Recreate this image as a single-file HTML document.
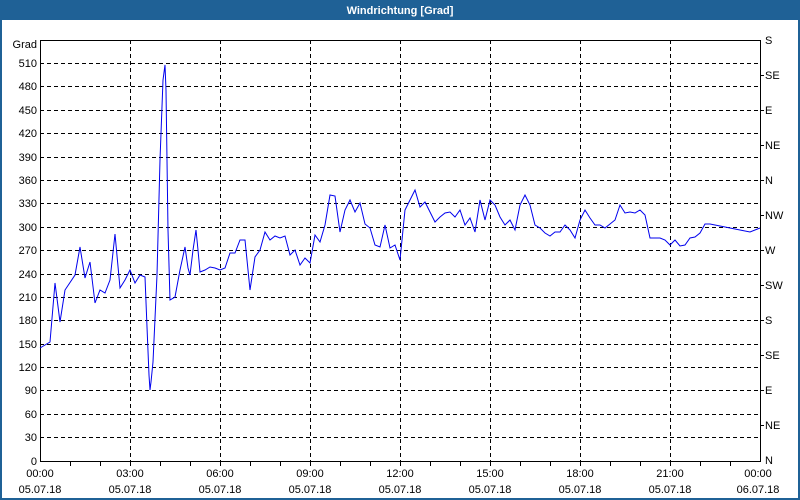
<!DOCTYPE html>
<html><head><meta charset="utf-8"><style>
html,body{margin:0;padding:0;background:#fff;}
body{width:800px;height:500px;overflow:hidden;position:relative;font-family:"Liberation Sans",sans-serif;}
</style></head><body>
<svg width="800" height="500" xmlns="http://www.w3.org/2000/svg" style="position:absolute;left:0;top:0" font-family="Liberation Sans, sans-serif" font-size="11">
<rect x="0" y="0" width="800" height="500" fill="#1f6196"/>
<rect x="2" y="20" width="796" height="478" fill="#fff"/>
<text x="400" y="14" fill="#fff" font-weight="bold" text-anchor="middle">Windrichtung [Grad]</text>
<g stroke="#000" stroke-dasharray="4,3" stroke-width="1">
<line x1="40" y1="63.5" x2="760" y2="63.5"/><line x1="40" y1="86.5" x2="760" y2="86.5"/><line x1="40" y1="110.5" x2="760" y2="110.5"/><line x1="40" y1="133.5" x2="760" y2="133.5"/><line x1="40" y1="157.5" x2="760" y2="157.5"/><line x1="40" y1="180.5" x2="760" y2="180.5"/><line x1="40" y1="203.5" x2="760" y2="203.5"/><line x1="40" y1="227.5" x2="760" y2="227.5"/><line x1="40" y1="250.5" x2="760" y2="250.5"/><line x1="40" y1="274.5" x2="760" y2="274.5"/><line x1="40" y1="297.5" x2="760" y2="297.5"/><line x1="40" y1="320.5" x2="760" y2="320.5"/><line x1="40" y1="344.5" x2="760" y2="344.5"/><line x1="40" y1="367.5" x2="760" y2="367.5"/><line x1="40" y1="390.5" x2="760" y2="390.5"/><line x1="40" y1="414.5" x2="760" y2="414.5"/><line x1="40" y1="437.5" x2="760" y2="437.5"/>
<line x1="130.5" y1="40" x2="130.5" y2="461"/><line x1="220.5" y1="40" x2="220.5" y2="461"/><line x1="310.5" y1="40" x2="310.5" y2="461"/><line x1="400.5" y1="40" x2="400.5" y2="461"/><line x1="490.5" y1="40" x2="490.5" y2="461"/><line x1="580.5" y1="40" x2="580.5" y2="461"/><line x1="670.5" y1="40" x2="670.5" y2="461"/>
</g>
<g stroke="#000" stroke-width="1" fill="none">
<path d="M40.5 461V40.5H760.5V461.5H40"/>
<path d="M70.5 461v5M100.5 461v5M130.5 461v5M160.5 461v5M190.5 461v5M220.5 461v5M250.5 461v5M280.5 461v5M310.5 461v5M340.5 461v5M370.5 461v5M400.5 461v5M430.5 461v5M460.5 461v5M490.5 461v5M520.5 461v5M550.5 461v5M580.5 461v5M610.5 461v5M640.5 461v5M670.5 461v5M700.5 461v5M730.5 461v5"/>
<path d="M760 75.5h4M760 110.5h4M760 145.5h4M760 180.5h4M760 215.5h4M760 250.5h4M760 285.5h4M760 320.5h4M760 355.5h4M760 390.5h4M760 425.5h4"/>
</g>
<polyline fill="none" stroke="#0000ee" stroke-width="1" points="40,348 50,342 55,283 60,322 65,290 75,275 80,247 85,278 90,262 95,303 100,290 105,293 110,280 115,234 120,288 125,280 130,270 135,283 140,275 145,277 147,327 149,375 150,390 151,382 153,362 157,275 160,160 163,80 165,65 166,90 168,230 170,300 175,297 180,270 185,247 188,268 190,275 193,250 196,230 198,250 200,272 205,270 210,267 215,268 220,270 225,268 230,253 235,253 240,240 245,240 250,290 255,257 260,250 265,232 270,240 275,236 280,238 285,236 290,255 295,250 300,265 305,258 310,263 315,235 320,242 325,225 330,195 335,196 340,232 345,210 350,200 355,212 360,203 365,224 370,228 375,245 380,247 385,225 390,248 395,245 400,260 405,210 410,200 415,190 420,207 425,202 430,212 435,222 440,217 445,213 450,212 455,217 460,210 465,225 470,218 475,232 480,200 485,220 490,200 495,205 500,217 505,225 510,220 515,230 520,205 525,195 530,205 535,225 540,228 545,233 550,236 555,232 560,232 565,225 570,230 575,238 580,220 585,210 590,218 595,225 600,225 605,228 610,224 615,220 620,205 625,213 630,212 635,213 640,210 645,215 650,238 655,238 660,238 665,240 670,245 675,240 680,246 685,245 690,238 695,237 700,233 705,224 710,224 720,226 730,228 740,230 750,232 760,228"/>
<g fill="#000" text-anchor="end">
<text x="37" y="48">Grad</text>
<text x="37" y="67">510</text><text x="37" y="90">480</text><text x="37" y="114">450</text><text x="37" y="137">420</text><text x="37" y="161">390</text><text x="37" y="184">360</text><text x="37" y="207">330</text><text x="37" y="231">300</text><text x="37" y="254">270</text><text x="37" y="278">240</text><text x="37" y="301">210</text><text x="37" y="324">180</text><text x="37" y="348">150</text><text x="37" y="371">120</text><text x="37" y="394">90</text><text x="37" y="418">60</text><text x="37" y="441">30</text><text x="37" y="465">0</text>
</g>
<g fill="#000">
<text x="765" y="44">S</text><text x="765" y="79">SE</text><text x="765" y="114">E</text><text x="765" y="149">NE</text><text x="765" y="184">N</text><text x="765" y="219">NW</text><text x="765" y="254">W</text><text x="765" y="289">SW</text><text x="765" y="324">S</text><text x="765" y="359">SE</text><text x="765" y="394">E</text><text x="765" y="429">NE</text><text x="765" y="464">N</text>
</g>
<g fill="#000" text-anchor="middle">
<text x="40" y="477">00:00</text><text x="130" y="477">03:00</text><text x="220" y="477">06:00</text><text x="310" y="477">09:00</text><text x="400" y="477">12:00</text><text x="490" y="477">15:00</text><text x="580" y="477">18:00</text><text x="670" y="477">21:00</text><text x="758" y="477">00:00</text>
<text x="40" y="493">05.07.18</text><text x="130" y="493">05.07.18</text><text x="220" y="493">05.07.18</text><text x="310" y="493">05.07.18</text><text x="400" y="493">05.07.18</text><text x="490" y="493">05.07.18</text><text x="580" y="493">05.07.18</text><text x="670" y="493">05.07.18</text><text x="758" y="493">06.07.18</text>
</g>
</svg>
</body></html>
